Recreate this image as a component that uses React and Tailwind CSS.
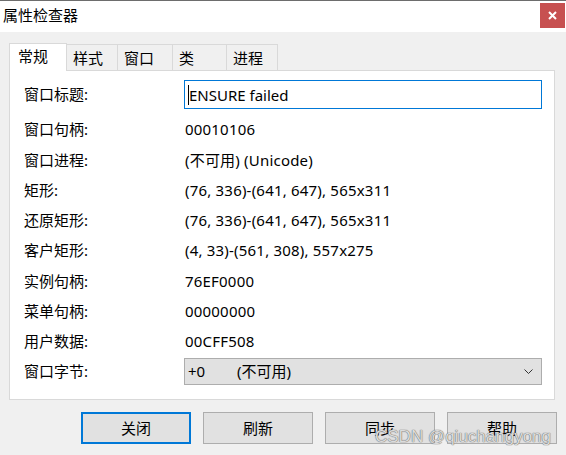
const tabs = ["常规", "样式", "窗口", "类", "进程"];
const tabWidths = ["w-[51px]", "w-[55px]", "w-[54px]", "w-[51px]"];

const rows = [
  { label: "窗口句柄:", value: "00010106", h: "h-[31px]" },
  { label: "窗口进程:", value: "(不可用) (Unicode)", h: "h-[30px]" },
  { label: "矩形:", value: "(76, 336)-(641, 647), 565x311", h: "h-[30px]" },
  { label: "还原矩形:", value: "(76, 336)-(641, 647), 565x311", h: "h-[30px]" },
  { label: "客户矩形:", value: "(4, 33)-(561, 308), 557x275", h: "h-[31px]" },
  { label: "实例句柄:", value: "76EF0000", h: "h-[30px]" },
  { label: "菜单句柄:", value: "00000000", h: "h-[30px]" },
  { label: "用户数据:", value: "00CFF508", h: "h-[30px]" },
];

const buttons = ["关闭", "刷新", "同步", "帮助"];

export default function App() {
  return (
    <div className="relative w-[566px] h-[455px] bg-[#f0f0f0] flex flex-col text-[15px] text-black font-['Noto_Sans','Noto_Sans_CJK_SC',sans-serif] overflow-hidden">
      {/* title bar */}
      <div className="h-px bg-[#6d6d6d]" />
      <div className="h-[31px] bg-white flex items-start justify-between">
        <span className="pl-[3px] pt-[4px] leading-[20px]">属性检查器</span>
        <div className="mt-[2px] mr-px w-[25px] h-[25px] bg-[#c75050] flex items-center justify-center">
          <svg width="9" height="9" viewBox="0 0 9 9">
            <path d="M1 1L8 8M8 1L1 8" stroke="white" strokeWidth="2" />
          </svg>
        </div>
      </div>

      {/* tabs */}
      <div className="pl-[9px] pt-[10px] flex items-end h-[38px]">
        <div className="relative z-10 w-[58px] h-[28px] -mb-px bg-white border-t border-l border-r border-[#d9d9d9] pl-[8px] pt-[2px] leading-[20px]">
          {tabs[0]}
        </div>
        {tabs.slice(1).map((t, i) => (
          <div
            key={t}
            className={`${tabWidths[i]} h-[26px] border-t border-r border-[#d9d9d9] pl-[6px] pt-[3px] leading-[20px]`}
          >
            {t}
          </div>
        ))}
      </div>

      {/* panel */}
      <div className="ml-[9px] w-[546px] h-[330px] bg-white border border-[#d9d9d9] pl-[14px] flex flex-col">
        <div className="mt-[9px] flex items-center">
          <span className="w-[160px]">窗口标题:</span>
          <div className="w-[358px] h-[29px] border border-[#0078d7] flex items-center pl-[3px]">
            <span className="w-px h-[20px] bg-black" />
            <span className="leading-[20px]">ENSURE failed</span>
          </div>
        </div>
        <div className="mt-[5px] flex flex-col">
          {rows.map((r) => (
            <div key={r.label} className={`${r.h} flex items-center`}>
              <span className="w-[161px]">{r.label}</span>
              <span className="tracking-[0.2px]">{r.value}</span>
            </div>
          ))}
        </div>
        <div className="mt-[2px] flex items-center">
          <span className="w-[160px]">窗口字节:</span>
          <div className="w-[358px] h-[27px] bg-[#e1e1e1] border border-[#adadad] flex items-center pl-[3px] pr-[8px]">
            <span className="w-[49px]">+0</span>
            <span className="flex-1">(不可用)</span>
            <svg width="9" height="6" viewBox="0 0 9 6">
              <path d="M0.5 0.5L4.5 4.5L8.5 0.5" fill="none" stroke="#333" strokeWidth="1" />
            </svg>
          </div>
        </div>
      </div>

      {/* buttons */}
      <div className="mt-[12px] pl-[81px] flex gap-[12px]">
        {buttons.map((b, i) => (
          <div
            key={b}
            className={
              i === 0
                ? "w-[110px] h-[32px] bg-[#e1e1e1] border-2 border-[#0078d7] flex items-center justify-center"
                : "w-[110px] h-[32px] bg-[#e1e1e1] border border-[#adadad] flex items-center justify-center"
            }
          >
            {b}
          </div>
        ))}
      </div>

      {/* watermark */}
      <div className="absolute left-[375px] top-[426px] text-[17px] leading-[22px] text-[#dcdcdc] font-['Liberation_Sans',sans-serif] [text-shadow:0_0_1px_#6a6a6a,0_0_1px_#6a6a6a]">
        CSDN @qiuchangyong
      </div>
    </div>
  );
}
